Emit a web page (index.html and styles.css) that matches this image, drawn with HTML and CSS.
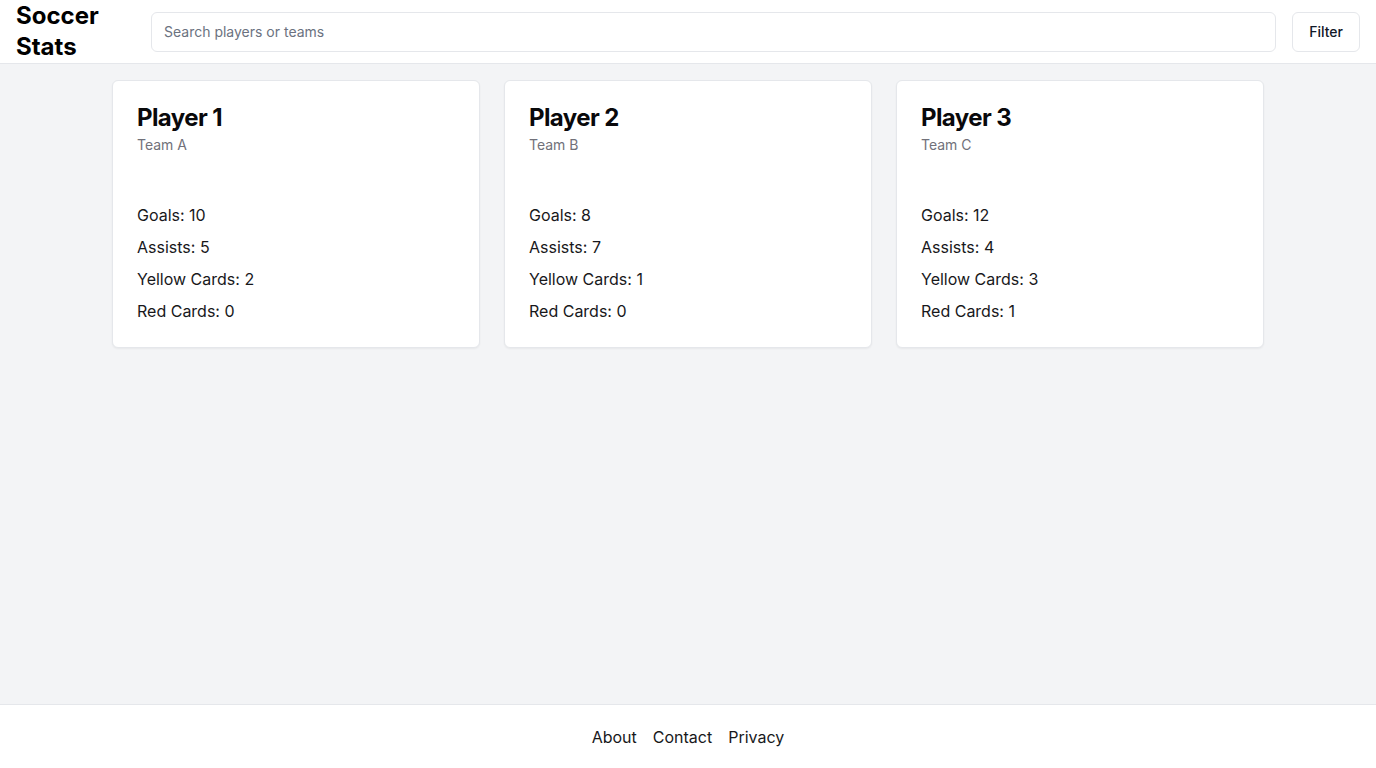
FILE: index.html
```html
<!DOCTYPE html>
<html lang="en">
<head>
<meta charset="utf-8">
<title>Soccer Stats</title>
<link rel="stylesheet" href="styles.css">
</head>
<body>
<div class="page">
  <header class="header">
    <h1 class="logo">Soccer Stats</h1>
    <input class="search" type="text" placeholder="Search players or teams">
    <button class="filter-btn">Filter</button>
  </header>
  <main class="main">
    <div class="grid">
      <div class="card">
        <h2 class="player">Player 1</h2>
        <p class="team">Team A</p>
        <div class="stats">
          <p>Goals: 10</p>
          <p>Assists: 5</p>
          <p>Yellow Cards: 2</p>
          <p>Red Cards: 0</p>
        </div>
      </div>
      <div class="card">
        <h2 class="player">Player 2</h2>
        <p class="team">Team B</p>
        <div class="stats">
          <p>Goals: 8</p>
          <p>Assists: 7</p>
          <p>Yellow Cards: 1</p>
          <p>Red Cards: 0</p>
        </div>
      </div>
      <div class="card">
        <h2 class="player">Player 3</h2>
        <p class="team">Team C</p>
        <div class="stats">
          <p>Goals: 12</p>
          <p>Assists: 4</p>
          <p>Yellow Cards: 3</p>
          <p>Red Cards: 1</p>
        </div>
      </div>
    </div>
  </main>
  <footer class="footer">
    <a href="#">About</a>
    <a href="#">Contact</a>
    <a href="#">Privacy</a>
  </footer>
</div>
</body>
</html>
```
FILE: styles.css
```css
* { box-sizing: border-box; }
html, body { margin: 0; padding: 0; }
body {
  font-family: Inter, "Noto Sans", sans-serif;
  color: #111827;
  background: #ffffff;
}
.page {
  display: flex;
  flex-direction: column;
  height: 768px;
}
.header {
  display: flex;
  align-items: center;
  gap: 16px;
  height: 64px;
  padding: 0 16px;
  background: #ffffff;
  border-bottom: 1px solid #e5e7eb;
}
.logo {
  margin: 0;
  width: 119px;
  flex: none;
  font-size: 24px;
  line-height: 31px;
  font-weight: 700;
  color: #000000;
  position: relative;
  top: -1px;
}
.search {
  flex: 1;
  height: 40px;
  padding: 0 12px;
  border: 1px solid #e5e7eb;
  border-radius: 6px;
  font-family: inherit;
  font-size: 14px;
  color: #111827;
  background: #ffffff;
  outline: none;
}
.search::placeholder { color: #6b7280; }
.filter-btn {
  height: 40px;
  padding: 0 16px;
  border: 1px solid #e5e7eb;
  border-radius: 6px;
  background: #ffffff;
  font-family: inherit;
  font-size: 14px;
  font-weight: 500;
  color: #111827;
}
.main {
  flex: 1;
  background: #f3f4f6;
  padding: 16px 0;
}
.grid {
  width: 1152px;
  margin: 0 auto;
  display: grid;
  grid-template-columns: repeat(3, 1fr);
  gap: 24px;
}
.card {
  background: #ffffff;
  border: 1px solid #e5e7eb;
  border-radius: 6px;
  box-shadow: 0 1px 2px rgba(0,0,0,0.05);
  padding: 23px 24px 24px;
}
.player {
  margin: 0;
  font-size: 24px;
  line-height: 28px;
  font-weight: 700;
  letter-spacing: -0.6px;
  color: #09090b;
}
.team {
  margin: 3px 0 0;
  font-size: 14px;
  line-height: 20px;
  color: #71717a;
}
.stats {
  margin-top: 48px;
  display: flex;
  flex-direction: column;
  gap: 8px;
}
.stats p {
  margin: 0;
  font-size: 16px;
  line-height: 24px;
  color: #18181b;
}
.footer {
  display: flex;
  justify-content: center;
  gap: 16px;
  height: 64px;
  padding: 20px 0;
  border-top: 1px solid #e5e7eb;
  background: #ffffff;
}
.footer a {
  font-size: 16px;
  line-height: 24px;
  color: #18181b;
  text-decoration: none;
}
```
